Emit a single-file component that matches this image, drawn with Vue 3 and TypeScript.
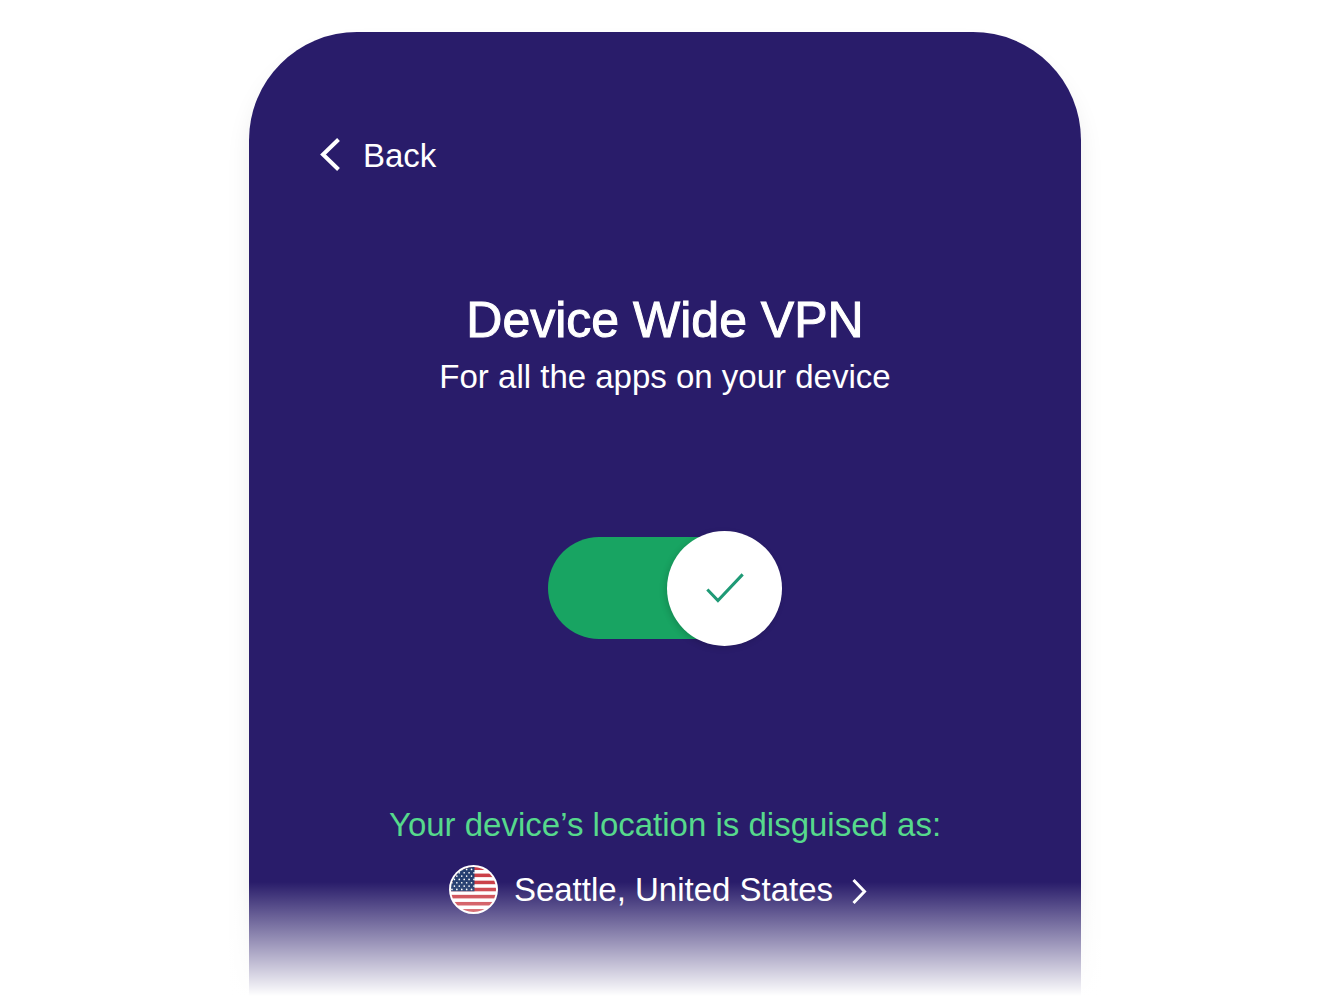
<script setup lang="ts">
import { ref } from 'vue'

const enabled = ref(true)
const location = ref('Seattle, United States')

interface Star { x: number; y: number }

const redStripes: number[] = [0, 2, 4, 6, 8, 10, 12]
const stars: Star[] = []
for (let row = 0; row < 7; row++) {
  for (let col = 0; col < 5; col++) {
    stars.push({ x: 3 + col * 5 + (row % 2 ? 2.5 : 0), y: 4.5 + row * 3.4 })
  }
}
</script>

<template>
  <main class="page">
    <section class="card">
      <button type="button" class="back">
        <svg class="back-icon" viewBox="0 0 24 40" aria-hidden="true">
          <path d="M21.5 3.5 6 18.500 21.5 33.5" />
        </svg>
        <span>Back</span>
      </button>

      <header class="heading">
        <h1>Device Wide VPN</h1>
        <p>For all the apps on your device</p>
      </header>

      <label class="toggle">
        <input v-model="enabled" type="checkbox" role="switch" aria-label="Device Wide VPN" />
        <span class="thumb">
          <svg v-if="enabled" viewBox="0 0 114 114" aria-hidden="true">
            <path d="M40 58 50.5 69 75 43" />
          </svg>
        </span>
      </label>

      <div class="location">
        <p>Your device’s location is disguised as:</p>
        <button type="button" class="place">
          <svg class="flag" viewBox="0 0 50 50" aria-hidden="true">
            <defs>
              <clipPath id="flag-disc"><circle cx="25" cy="25" r="23" /></clipPath>
            </defs>
            <circle cx="25" cy="25" r="25" fill="#fff" />
            <g clip-path="url(#flag-disc)">
              <rect
                v-for="i in redStripes"
                :key="i"
                x="0"
                :y="1.5 + i * 3.62"
                width="50"
                height="3.62"
                fill="#cb4048"
              />
              <rect x="0" y="0" width="26" height="26.8" fill="#263f70" />
              <circle
                v-for="(s, i) in stars"
                :key="`s${i}`"
                :cx="s.x"
                :cy="s.y"
                r="0.85"
                fill="#fff"
              />
            </g>
          </svg>
          <span>{{ location }}</span>
          <svg class="place-icon" viewBox="0 0 32 48" aria-hidden="true">
            <path d="M4.5 14 15.5 25.5 4.5 37" />
          </svg>
        </button>
      </div>
    </section>
  </main>
</template>

<style>
body {
  margin: 0;
  background: #fff;
}
</style>

<style scoped>
.page {
  display: flex;
  justify-content: center;
  box-sizing: border-box;
  min-height: 100vh;
  padding: 32px 24px 0;
  font-family: "Liberation Sans", Arial, Helvetica, sans-serif;
  font-size: 33px;
  line-height: 40px;
  color: #fff;
}

.card {
  position: relative;
  display: flex;
  flex-direction: column;
  align-items: center;
  box-sizing: border-box;
  width: 100%;
  max-width: 832px;
  padding: 104px 68px 80px;
  border-radius: 108px 108px 0 0;
  background: #291c6a;
  box-shadow: 0 16px 24px rgba(0, 0, 0, 0.08);
}

.card::after {
  content: "";
  position: absolute;
  inset: auto -24px 0;
  height: 118px;
  background: linear-gradient(to bottom, rgba(255, 255, 255, 0), #fff 114px);
  pointer-events: none;
}

button {
  display: flex;
  align-items: center;
  padding: 0;
  border: 0;
  background: none;
  color: inherit;
  font: inherit;
  cursor: pointer;
}

svg path {
  fill: none;
  stroke: currentColor;
}

.back {
  align-self: flex-start;
  gap: 22px;
}

.back-icon {
  width: 24px;
  height: 40px;
  stroke-width: 4;
}

.heading {
  margin-top: 114px;
  text-align: center;
}

h1,
p {
  margin: 0;
}

h1 {
  margin-bottom: 7px;
  font-size: 50px;
  line-height: 60px;
  font-weight: 400;
  -webkit-text-stroke: 1px currentColor;
}

.toggle {
  position: relative;
  display: flex;
  align-items: center;
  width: 234px;
  height: 114px;
  margin-top: 134px;
  cursor: pointer;
}

.toggle input {
  appearance: none;
  width: 220px;
  height: 102px;
  margin: 0;
  border-radius: 51px;
  background: #7b769c;
  cursor: pointer;
}

.toggle input:checked {
  background: #18a462;
}

.thumb {
  position: absolute;
  top: 0;
  left: 0;
  width: 115px;
  height: 115px;
  border-radius: 50%;
  background: #fff;
  box-shadow: -2px 2px 6px rgba(0, 0, 0, 0.14);
  color: #1f9a76;
}

.toggle input:checked + .thumb {
  left: auto;
  right: 0;
}

.thumb svg {
  display: block;
  stroke-width: 3;
}

.location {
  display: flex;
  flex-direction: column;
  align-items: center;
  gap: 20px;
  margin-top: 160px;
}

.location p {
  color: #56d98c;
  text-align: center;
}

.place {
  gap: 16px;
}

.flag {
  width: 49px;
  height: 49px;
}

.place-icon {
  width: 32px;
  height: 48px;
  stroke-width: 3;
}
</style>
